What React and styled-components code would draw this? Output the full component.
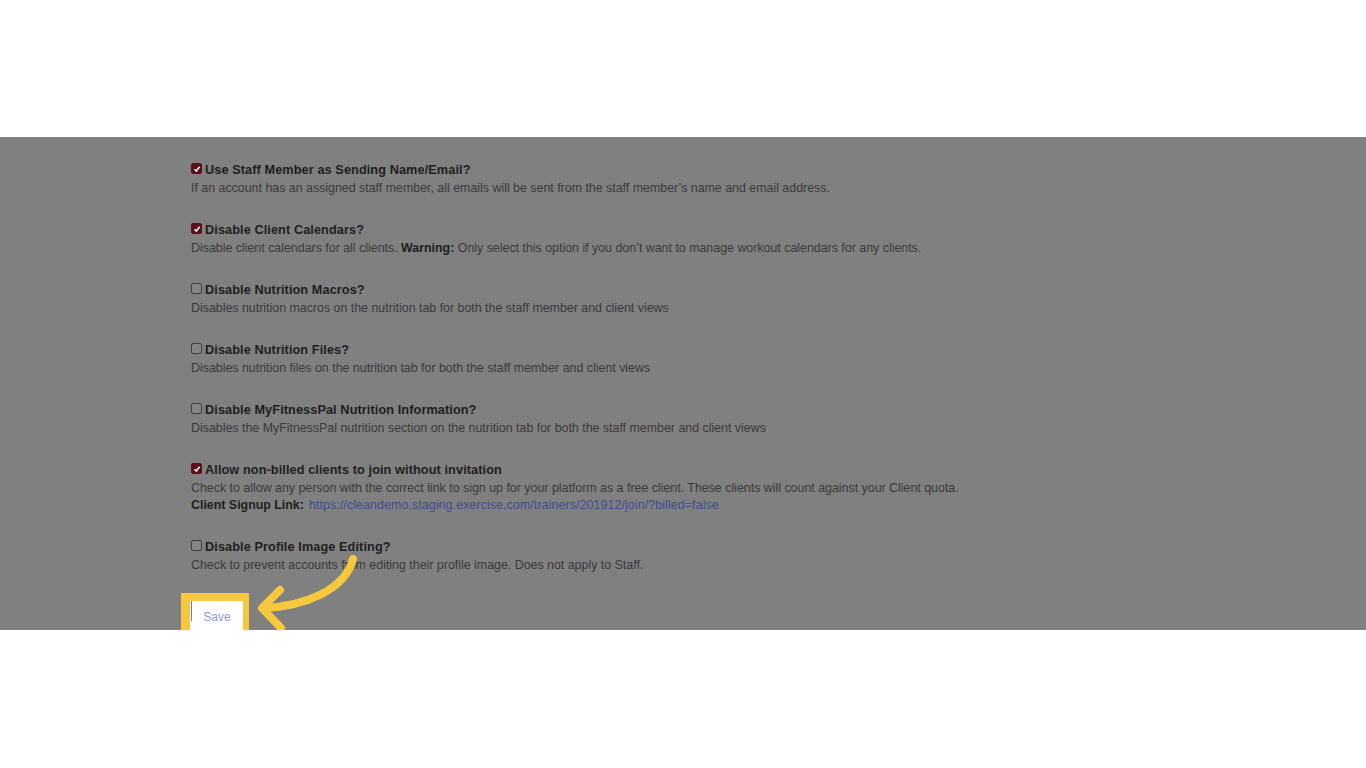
import React from "react";
import styled, { createGlobalStyle } from "styled-components";

const GlobalStyle = createGlobalStyle`
  html, body {
    margin: 0;
    padding: 0;
    background: #ffffff;
  }
  body {
    font-family: "Liberation Sans", Arial, sans-serif;
  }
`;

const Page = styled.div`
  width: 1366px;
  height: 768px;
  display: flex;
  flex-direction: column;
  background: #ffffff;
`;

const Spacer = styled.div`
  height: ${(p) => p.h}px;
  flex: none;
`;

const Band = styled.div`
  position: relative;
  height: 493px;
  flex: none;
  background: #808080;
  overflow: hidden;
  padding: 24px 0 0 191px;
  box-sizing: border-box;
`;

const Setting = styled.div`
  margin-bottom: 24px;
`;

const TitleRow = styled.label`
  display: flex;
  align-items: center;
  height: 18px;
  font-size: 12.7px;
  font-weight: bold;
  color: #1e1e1e;
  letter-spacing: 0.1px;
`;

const Box = styled.span`
  width: 11px;
  height: 11px;
  box-sizing: border-box;
  border-radius: 2px;
  margin: -3px 3px 0 0;
  display: inline-flex;
  align-items: center;
  justify-content: center;
  background: ${(p) => (p.checked ? "#5e0e1a" : "#858585")};
  border: 1px solid ${(p) => (p.checked ? "#5e0e1a" : "#3e3e3e")};
`;

const Desc = styled.div`
  margin-top: 1px;
  font-size: 12.4px;
  line-height: 17px;
  color: #3a3a3a;

  b {
    color: #1e1e1e;
  }
`;

const LinkLine = styled.div`
  font-size: 12.4px;
  line-height: 17px;
  color: #1e1e1e;
  font-weight: bold;

  a {
    font-weight: normal;
    color: #3d4d96;
    text-decoration: none;
    margin-left: 5px;
    letter-spacing: 0.1px;
  }
`;

const Frame = styled.div`
  display: inline-block;
  margin: -5px 0 0 -10px;
  padding: 8px 6px 0 9px;
  background: #f6c83e;
`;

const SaveButton = styled.button`
  position: relative;
  display: block;
  width: 53px;
  height: 40px;
  border: none;
  background: #ffffff;
  padding: 0 0 8px 1px;
  font-family: "Liberation Sans", Arial, sans-serif;
  font-size: 12px;
  color: #8c9be2;
  text-align: center;

  &::before {
    content: "";
    position: absolute;
    left: 1px;
    top: 0;
    width: 1px;
    height: 20px;
    background: #5b78d8;
  }
`;

const Arrow = styled.svg`
  position: absolute;
  left: 0;
  top: 0;
  pointer-events: none;
`;

function Check({ checked }) {
  return (
    <Box checked={checked}>
      {checked && (
        <svg width="8" height="8" viewBox="0 0 8 8">
          <path d="M1.5 4.2 L3.3 6 L6.6 1.8" fill="none" stroke="#ffffff" strokeWidth="1.5" />
        </svg>
      )}
    </Box>
  );
}

const settings = [
  {
    checked: true,
    title: "Use Staff Member as Sending Name/Email?",
    desc: "If an account has an assigned staff member, all emails will be sent from the staff member\u2019s name and email address.",
  },
  {
    checked: true,
    title: "Disable Client Calendars?",
    desc: (
      <>
        Disable client calendars for all clients. <b>Warning:</b>{" Only select this option if you don\u2019t want to manage workout calendars for any clients."}
      </>
    ),
  },
  {
    checked: false,
    title: "Disable Nutrition Macros?",
    desc: "Disables nutrition macros on the nutrition tab for both the staff member and client views",
  },
  {
    checked: false,
    title: "Disable Nutrition Files?",
    desc: "Disables nutrition files on the nutrition tab for both the staff member and client views",
  },
  {
    checked: false,
    title: "Disable MyFitnessPal Nutrition Information?",
    desc: "Disables the MyFitnessPal nutrition section on the nutrition tab for both the staff member and client views",
  },
  {
    checked: true,
    title: "Allow non-billed clients to join without invitation",
    desc: "Check to allow any person with the correct link to sign up for your platform as a free client. These clients will count against your Client quota.",
    link: "https://cleandemo.staging.exercise.com/trainers/201912/join/?billed=false",
  },
  {
    checked: false,
    title: "Disable Profile Image Editing?",
    desc: "Check to prevent accounts from editing their profile image. Does not apply to Staff.",
  },
];

export default function App() {
  return (
    <Page>
      <GlobalStyle />
      <Spacer h={137} />
      <Band>
        {settings.map((s) => (
          <Setting key={s.title}>
            <TitleRow>
              <Check checked={s.checked} />
              {s.title}
            </TitleRow>
            <Desc>{s.desc}</Desc>
            {s.link && (
              <LinkLine>
                Client Signup Link:<a href={s.link}>{s.link}</a>
              </LinkLine>
            )}
          </Setting>
        ))}
        <Frame>
          <SaveButton>Save</SaveButton>
        </Frame>
        <Arrow width="1366" height="493" viewBox="0 137 1366 493">
          <g fill="none" stroke="#f6c83e" strokeWidth="8" strokeLinecap="round" strokeLinejoin="round">
            <path d="M353 559 C 345 590, 305 606, 264 608" />
            <path d="M280 590 L262 608 L281 628" />
          </g>
        </Arrow>
      </Band>
    </Page>
  );
}
